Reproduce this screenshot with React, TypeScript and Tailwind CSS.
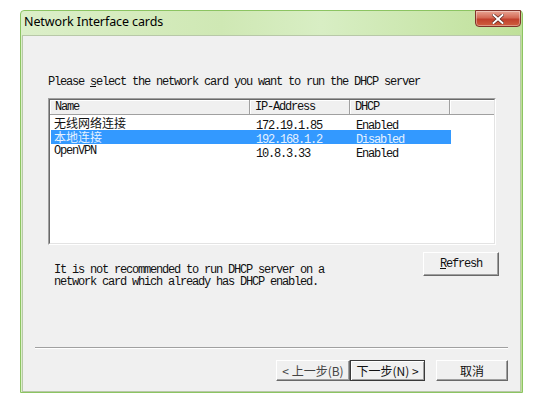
import React from "react";

const mono = "font-['Liberation_Mono','Noto_Sans_CJK_SC',monospace] text-[12px] tracking-[-1.2px] leading-[12px]";
const cjk = "font-['Noto_Sans_CJK_SC','Liberation_Sans',sans-serif]";

const rows = [
  { name: "无线网络连接", ip: "172.19.1.85", dhcp: "Enabled", sel: false, cn: true },
  { name: "本地连接", ip: "192.168.1.2", dhcp: "Disabled", sel: true, cn: true },
  { name: "OpenVPN", ip: "10.8.3.33", dhcp: "Enabled", sel: false, cn: false },
];

function HeaderCell({ w, label }: { w: string; label: string }) {
  return (
    <div
      className={`${w} h-full flex items-center pl-[5px] border-r border-r-[#a0a0a0] border-b border-b-[#a0a0a0] shadow-[inset_1px_1px_0_#ffffff] text-[#111]`}
    >
      <span className={mono}>{label}</span>
    </div>
  );
}

export default function App() {
  return (
    <div className="w-[536px] h-[401px] bg-white overflow-hidden">
      <div className="ml-[20px] mt-[10px] w-[503px] h-[383px] flex flex-col rounded-t-[4px] bg-[linear-gradient(90deg,#dcefc9_0%,#cfe8b4_40%,#d8eec4_60%,#bfe099_100%)] border border-[#8cc462]">
        {/* title bar */}
        <div className="h-[24px] flex items-start justify-between shrink-0">
          <div className="pl-[3px] pt-[3px] text-[12.5px] leading-[16px] text-black font-['Noto_Sans','Liberation_Sans',sans-serif] tracking-[-0.1px]">
            Network Interface cards
          </div>
          <div className="mr-[1px] -mt-[1px] w-[46px] h-[17px] rounded-b-[4px] border border-[#80322a] bg-[linear-gradient(180deg,#e8a493_0%,#d46a55_45%,#c1402c_55%,#cf5f3f_100%)] flex items-center justify-center shadow-[inset_0_0_0_1px_rgba(255,255,255,0.35)]">
            <svg width="12" height="10" viewBox="0 0 12 10">
              <path d="M1.5 1 L10.5 9 M10.5 1 L1.5 9" stroke="#4a1a14" strokeWidth="3.2" strokeLinecap="square" />
              <path d="M1.5 1 L10.5 9 M10.5 1 L1.5 9" stroke="#ffffff" strokeWidth="2" strokeLinecap="square" />
            </svg>
          </div>
        </div>
        {/* client area */}
        <div className="flex-1 mx-[1px] bg-[#f0f0f0] border border-[#b8c8a8] flex flex-col">
          <div className="pl-[25px] pr-[24px] flex flex-col">
            <div className={`${mono} mt-[40px] text-[#111]`}>
              Please <span className="underline">s</span>elect the network card you want to run the DHCP server
            </div>
            {/* list box */}
            <div className="mt-[10px] h-[147px] border-t border-l border-t-[#a0a0a0] border-l-[#a0a0a0] border-b border-r border-b-white border-r-white">
              <div className="h-full border-t border-l border-t-[#696969] border-l-[#696969] border-b border-r border-b-[#e3e3e3] border-r-[#e3e3e3] bg-white flex flex-col">
                <div className="h-[15px] flex bg-[#f0f0f0] shrink-0">
                  <HeaderCell w="w-[200px]" label="Name" />
                  <HeaderCell w="w-[100px]" label="IP-Address" />
                  <HeaderCell w="w-[100px]" label="DHCP" />
                  <div className="flex-1 h-full border-b border-b-[#a0a0a0] shadow-[inset_1px_1px_0_#ffffff]" />
                </div>
                <div className="pt-[1px] flex flex-col">
                  {rows.map((r) => (
                    <div
                      key={r.name}
                      className={`h-[14px] ml-[1px] w-[400px] flex items-center ${r.sel ? "bg-[#3399ff] text-[#e6f2ff]" : "text-[#111]"}`}
                    >
                      <div className="w-[200px] pl-[3px] h-[14px] flex items-center">
                        {r.cn ? (
                          <span className={`${cjk} text-[12px] leading-[14px]`}>{r.name}</span>
                        ) : (
                          <span className={mono}>{r.name}</span>
                        )}
                      </div>
                      <div className="w-[100px] pl-[5px]">
                        <span className={mono}>{r.ip}</span>
                      </div>
                      <div className="w-[100px] pl-[5px]">
                        <span className={mono}>{r.dhcp}</span>
                      </div>
                    </div>
                  ))}
                </div>
              </div>
            </div>
          </div>
          {/* note + refresh */}
          <div className="flex items-start pl-[31px] pr-[21px] mt-[7px]">
            <div className={`${mono} mt-[12px] text-[#111]`}>
              <div>It is not recommended to run DHCP server on a</div>
              <div>network card which already has DHCP enabled.</div>
            </div>
            <div className="ml-auto w-[76px] h-[24px] bg-[#f0f0f0] border-t border-l border-t-white border-l-white border-b border-r border-b-[#696969] border-r-[#696969] shadow-[inset_-1px_-1px_0_#a0a0a0] flex items-center justify-center text-[#111]">
              <span className={mono}>
                <span className="underline">R</span>efresh
              </span>
            </div>
          </div>
          {/* separator */}
          <div className="mx-[12px] mt-[59px] h-[2px] border-t border-t-[#a0a0a0] border-b border-b-white" />
          {/* buttons */}
          <div className="flex mt-[11px] pr-[12px] justify-end">
            <div className={`w-[74px] h-[21px] bg-[#f0f0f0] border-t border-l border-t-white border-l-white border-b border-r border-b-[#696969] border-r-[#696969] shadow-[inset_-1px_-1px_0_#a0a0a0] flex items-center justify-center ${cjk} text-[12px] leading-[14px] text-[#444]`}>
              &lt; 上一步(B)
            </div>
            <div className={`w-[75px] h-[21px] bg-[#f0f0f0] border border-[#3a3a3a] shadow-[inset_1px_1px_0_#ffffff,inset_-1px_-1px_0_#a0a0a0] flex items-center justify-center ${cjk} text-[12px] leading-[14px] text-[#111]`}>
              下一步(N) &gt;
            </div>
            <div className={`ml-[11px] w-[72px] h-[21px] bg-[#f0f0f0] border-t border-l border-t-white border-l-white border-b border-r border-b-[#696969] border-r-[#696969] shadow-[inset_-1px_-1px_0_#a0a0a0] flex items-center justify-center ${cjk} text-[12px] leading-[14px] text-[#111]`}>
              取消
            </div>
          </div>
        </div>
      </div>
    </div>
  );
}
